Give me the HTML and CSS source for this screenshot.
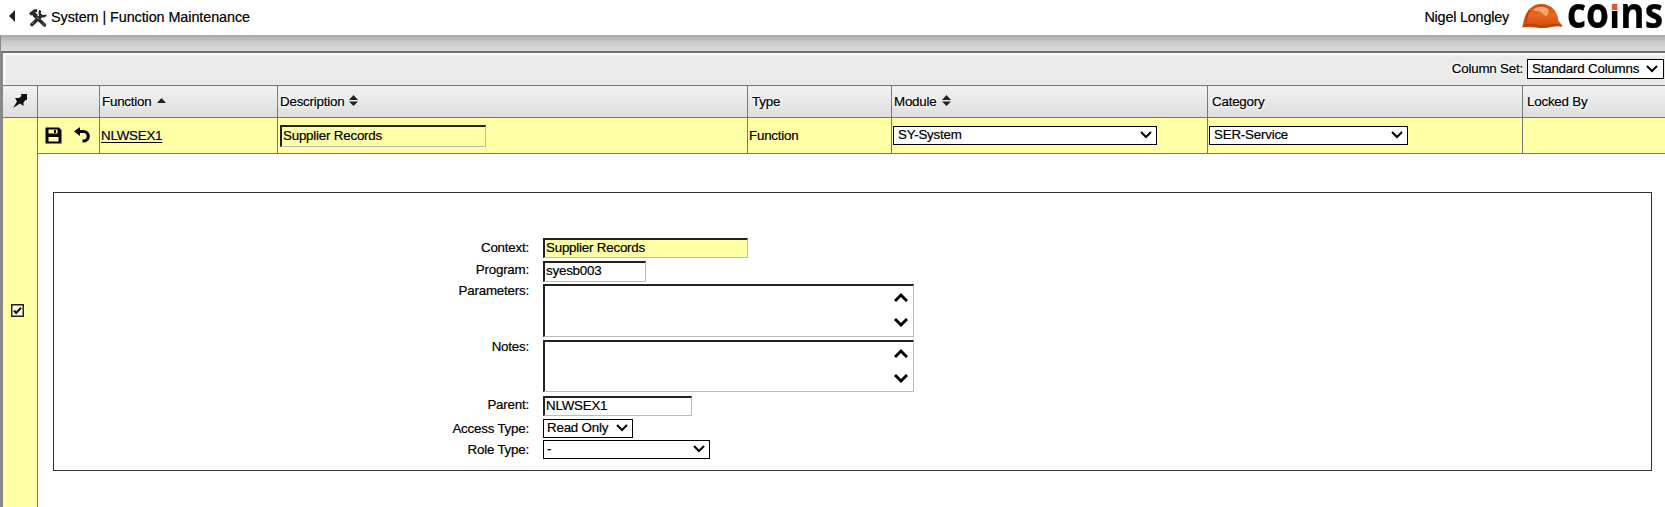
FILE: index.html
```html
<!DOCTYPE html>
<html lang="en">
<head>
<meta charset="utf-8">
<title>System | Function Maintenance</title>
<link rel="stylesheet" href="styles.css">
</head>
<body>
<header class="top">
  <svg class="back" width="6" height="12" viewBox="0 0 6 12"><path d="M6 0v12L0 6z" fill="#222"/></svg>
  <svg class="tools" width="18" height="18" viewBox="0 0 18 18" fill="none" stroke="#2b2b2b">
    <path d="M6 7L15.500 16" stroke-width="3.400" stroke-linecap="round"/>
    <path d="M1 5.500L5.500 2 8 1.500" stroke-width="3.200"/>
    <path d="M4 4l3.500 3.500" stroke-width="4"/>
    <path d="M12 7L3 15.500" stroke-width="3.600" stroke-linecap="round"/>
    <path d="M11.500 1.500c-1.500 2-1 4 .5 5s3.500 1 5-.5" stroke-width="2.400"/>
    <path d="M8 8.500l1.500 1.500M3.500 14.500l1-1M14 14.500l1 1" stroke="#ddd" stroke-width=".8"/>
  </svg>
  <h1 class="title">System | Function Maintenance</h1>
  <span class="user">Nigel Longley</span>
  <svg class="helmet" width="41" height="25" viewBox="0 0 41 25">
    <defs><linearGradient id="shell" x1="0" y1="0" x2="0" y2="1"><stop offset="0" stop-color="#c94c10"/><stop offset=".45" stop-color="#e86a20"/><stop offset="1" stop-color="#cf480a"/></linearGradient></defs>
    <path d="M1 21C2 9 9 0 19 0c11 0 17 8 17.500 17l4.500 5.500c-7-1-12 1.500-20 1.500-8 0-13-2-21-.5z" fill="url(#shell)"/>
    <path d="M12 5c4-3 11-3 15 1-1 3-1 6-3 6-3-1-4-5-9-5-4 0-4-1-3-2z" fill="#f7a66c"/>
    <path d="M8 6c-3 4-4 8-4 13" fill="none" stroke="#b63d09" stroke-width="1.500"/>
    <path d="M1 22c8-4 13 .5 20 .5 6 0 10-4 18-.5" fill="none" stroke="#b73c08" stroke-width="1.500"/>
  </svg>
  <span class="brand">co<span class="brand-i">i</span>ns</span>
</header>
<div class="shade"></div>
<main class="frame">
  <div class="toolbar">
    <span class="glow">Column Set:</span>
    <span class="select set">Standard Columns<svg class="chev" viewBox="0 0 12 8"><path d="M1 1l5 5 5-5"/></svg></span>
  </div>
  <div class="grid head">
    <div class="cell pin"><svg width="16" height="16" viewBox="0 0 16 16"><path d="M9 1h6v6h-1.500l-2 2.500V13L8 10.500 1 15l4-6.500L3 5h4l2.500-2z" fill="#111"/></svg></div>
    <div class="cell"></div>
    <div class="cell"><span class="glow">Function</span><svg class="sort" width="9" height="5" viewBox="0 0 9 5"><path d="M0 5L4.500 0 9 5z"/></svg></div>
    <div class="cell"><span class="glow">Description</span><svg class="sort both" width="9" height="11" viewBox="0 0 9 11"><path d="M0 5L4.500 0 9 5zM0 6.500h9L4.500 11z"/></svg></div>
    <div class="cell wide"><span class="glow">Type</span></div>
    <div class="cell"><span class="glow">Module</span><svg class="sort both" width="9" height="11" viewBox="0 0 9 11"><path d="M0 5L4.500 0 9 5zM0 6.500h9L4.500 11z"/></svg></div>
    <div class="cell wide"><span class="glow">Category</span></div>
    <div class="cell wide"><span class="glow">Locked By</span></div>
  </div>
  <div class="body">
    <aside class="rail"><svg class="check" width="13" height="13" viewBox="0 0 13 13"><path d="M.75.75h11.500v11.500H.75z" fill="#ffffd8" stroke="#222" stroke-width="1.500"/><path d="M3 6.500L5.200 9 10 3.800" fill="none" stroke="#111" stroke-width="2"/></svg></aside>
    <div class="content">
      <div class="grid row">
        <div class="cell actions">
          <svg width="17" height="17" viewBox="0 0 17 17"><path fill-rule="evenodd" d="M1 .5h13l2.500 2.500v13.500H.5V1zM3.500 2.500v4h9v-4zM3.500 10v4.500h10V10z" fill="#080808"/><path d="M9 3h2v3H9z" fill="#080808"/></svg>
          <svg width="17" height="17" viewBox="0 0 17 17"><path d="M4 4.500h5.500a4.500 4.500 0 0 1 0 9.500H8.500" fill="none" stroke="#080808" stroke-width="3.200"/><path d="M0 4.500L6 0v9z" fill="#080808"/></svg>
        </div>
        <div class="cell"><a class="link">NLWSEX1</a></div>
        <div class="cell"><span class="field yellow desc">Supplier Records</span></div>
        <div class="cell">Function</div>
        <div class="cell"><span class="select module">SY-System<svg class="chev" viewBox="0 0 12 8"><path d="M1 1l5 5 5-5"/></svg></span></div>
        <div class="cell"><span class="select category">SER-Service<svg class="chev" viewBox="0 0 12 8"><path d="M1 1l5 5 5-5"/></svg></span></div>
        <div class="cell"></div>
      </div>
      <section class="panel">
        <div class="line context"><label>Context:</label><span class="field yellow">Supplier Records</span></div>
        <div class="line program"><label>Program:</label><span class="field">syesb003</span></div>
        <div class="line area"><label>Parameters:</label><span class="field"><svg viewBox="0 0 14 36"><path d="M1 9l6-6 6 6M1 27l6 6 6-6"/></svg></span></div>
        <div class="line area notes"><label>Notes:</label><span class="field"><svg viewBox="0 0 14 36"><path d="M1 9l6-6 6 6M1 27l6 6 6-6"/></svg></span></div>
        <div class="line parent"><label>Parent:</label><span class="field">NLWSEX1</span></div>
        <div class="line access"><label>Access Type:</label><span class="select">Read Only<svg class="chev" viewBox="0 0 12 8"><path d="M1 1l5 5 5-5"/></svg></span></div>
        <div class="line role"><label>Role Type:</label><span class="select">-<svg class="chev" viewBox="0 0 12 8"><path d="M1 1l5 5 5-5"/></svg></span></div>
      </section>
    </div>
  </div>
</main>
</body>
</html>
```
FILE: styles.css
```css
* { box-sizing: border-box; }
body {
  margin: 0;
  height: 507px;
  overflow: hidden;
  display: flex;
  flex-direction: column;
  background: #fff;
  color: #000;
  font: 13.33px/16px "Liberation Sans", Arial, sans-serif;
  letter-spacing: -.2px;
  -webkit-text-stroke: .2px #000;
}
svg { display: block; flex: none; }
.top { height: 35px; flex: none; display: flex; align-items: flex-start; padding-left: 9px; }
.back { margin-top: 10px; }
.tools { margin: 9px 0 0 14px; }
.title { margin: 9px 0 0 4px; font-size: 14.4px; font-weight: normal; letter-spacing: -.08px; }
.user { margin: 9px 13px 0 auto; font-size: 14.4px; letter-spacing: -.2px; }
.helmet { margin-top: 4px; }
.brand { width: 98px; margin: -3px 0 0 4px; font: bold 36px/36px "Open Sans", sans-serif; letter-spacing: 0; white-space: nowrap; transform: scale(1.03, 1.18); transform-origin: 0 32px; }
.brand-i { background: linear-gradient(transparent 18px, #e5582b 18px 22.5px, #fff 22.5px 24px, #000 24px); -webkit-background-clip: text; color: transparent; -webkit-text-stroke: 0; }
.shade { height: 16px; flex: none; border-left: 1px solid #888; background: linear-gradient(#aaa, #c8c8c8 40%, #dcdcdc); }
.frame { flex: 1; min-height: 0; display: flex; flex-direction: column; border-left: 3px solid #888; border-top: 2px solid #707070; }
.toolbar { height: 32px; flex: none; display: flex; justify-content: flex-end; align-items: flex-start; gap: 4px; padding: 6px 1px 0 0; background: #eaeaea; box-shadow: inset 2px 2px 3px #fff; line-height: 20px; }
.glow { text-shadow: 0 0 3px #fff, 0 0 4px #fff, 0 0 5px #fff; }
.grid { display: grid; flex: none; }
.head { grid-template-columns: 34px 62px 178px 470px 144px 316px 315px 1fr; height: 33px; border-top: 1px solid #777; border-bottom: 1px solid #777; background: linear-gradient(#f2f2f2, #dedede); }
.head .cell { display: flex; align-items: center; padding-left: 2px; border-left: 1px solid #777; }
.head .cell:first-child { border-left: 0; }
.head .cell.pin { padding: 0 0 2px 9px; }
.head .wide { padding-left: 4px; }
.sort { margin: 0 0 3px 5px; fill: #222; }
.body { flex: 1; min-height: 0; display: flex; }
.rail { width: 35px; flex: none; padding: 186px 0 0 8px; background: #ffffa6; border-right: 1px solid #777; }
.content { flex: 1; }
.row { grid-template-columns: 61px 178px 470px 144px 316px 315px 1fr; height: 36px; border-bottom: 1px solid #777; background: #ffffa6; }
.row .cell { padding: 10px 0 0 1px; border-left: 1px solid #777; }
.row .cell:first-child { border-left: 0; }
.row .actions { display: flex; gap: 12px; padding: 9px 0 0 7px; }
.link { color: #00002b; text-decoration: underline; text-underline-offset: 2px; }
.select { display: flex; align-items: center; justify-content: space-between; height: 19px; padding: 0 4px 1px 3px; border: 1px solid #000; background: #fff; }
.chev { width: 12px; height: 8px; fill: none; stroke: #000; stroke-width: 2; }
.row .select { margin-top: -2px; padding-left: 4px; }
.toolbar .set { width: 137px; height: 20px; padding: 0 5px 1px 4px; }
.module { width: 264px; }
.category { width: 199px; }
.field { display: block; border: 1px solid #bbb; border-top: 2px solid #222; border-left: 2px solid #222; background: #fff; padding-left: 1px; }
.yellow { background: #ffffa6; }
.desc { width: 206px; height: 22px; margin: -3px 0 0 1px; line-height: 18px; }
.panel { width: 1599px; height: 279px; margin: 38px 0 0 15px; padding-top: 45px; border: 1px solid #333; }
.line { display: grid; grid-template-columns: 475px auto; column-gap: 14px; justify-content: start; }
.line label { text-align: right; }
.context { height: 23px; }
.context label { padding-top: 2px; }
.context .field { width: 205px; height: 20px; line-height: 15px; }
.program { height: 23px; }
.program label, .parent label { padding-top: 1px; }
.program .field { width: 103px; height: 21px; }
.program .field, .parent .field { line-height: 15px; }
.area { height: 56px; }
.area label { margin-top: -1px; }
.area .field { width: 371px; height: 53px; }
.area svg { width: 14px; height: 36px; margin: 6px 5px 0 auto; fill: none; stroke: #000; stroke-width: 3; }
.notes .field { height: 52px; }
.parent { height: 23px; }
.parent .field { width: 149px; height: 20px; }
.access { height: 21px; }
.access label, .role label { padding-top: 2px; }
.access .select { width: 90px; }
.role .select { width: 167px; }
```
